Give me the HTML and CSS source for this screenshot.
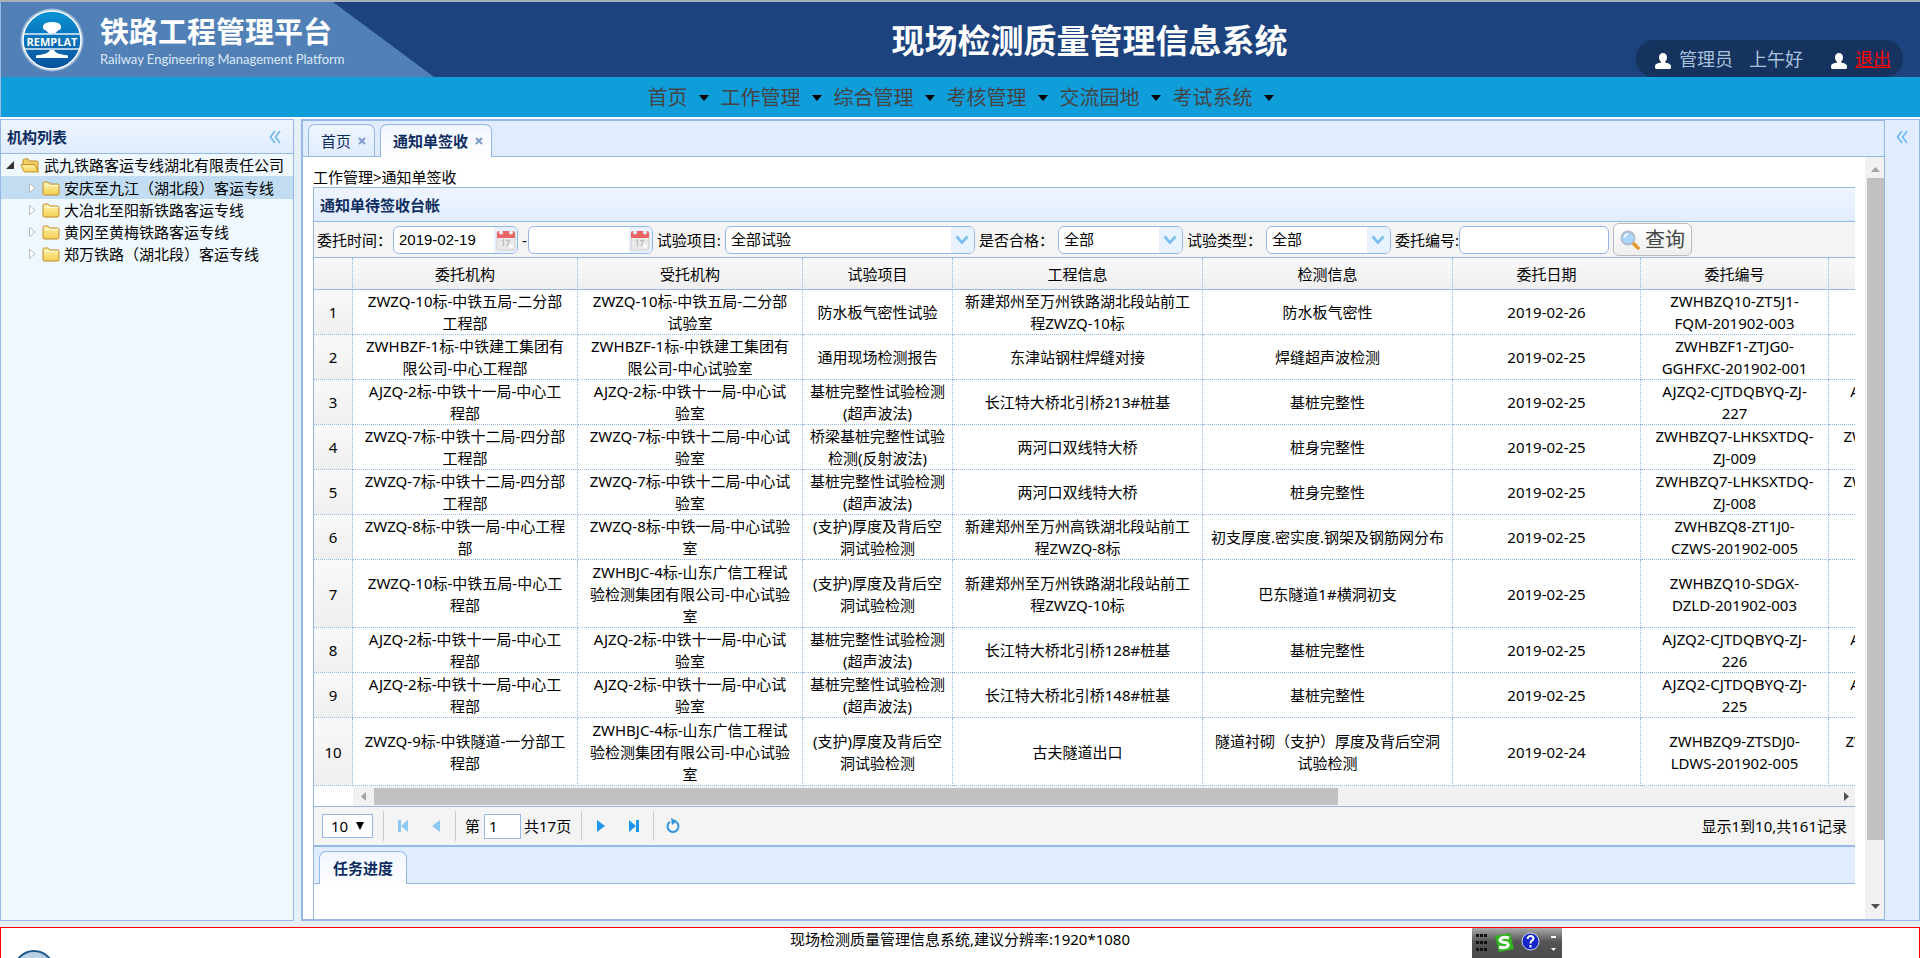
FILE: index.html
```html
<!DOCTYPE html>
<html lang="zh-CN">

<head>
  <meta charset="UTF-8">
  <meta name="viewport" content="width=device-width, initial-scale=1.0">
  <title>现场检测质量管理信息系统</title>

  <link rel="stylesheet" href="styles.css">
</head>

<body>
  <svg class="sprite" width="0" height="0">
    <defs>
      <linearGradient id="folder-fill" x1="0" y1="0" x2="0" y2="1">
        <stop offset="0" stop-color="#fff3a8" />
        <stop offset="1" stop-color="#f5cf55" />
      </linearGradient>
      <linearGradient id="logo-fill" x1="0" y1="0" x2="0" y2="1">
        <stop offset="0" stop-color="#0a93d6" />
        <stop offset="1" stop-color="#06509a" />
      </linearGradient>
    </defs>
    <symbol id="folder" viewBox="0 0 18 16">
      <path d="M1 3.500Q1 2 2.500 2H6L8 4H15.500Q17 4 17 5.500V13.500Q17 15 15.500 15H2.500Q1 15 1 13.500Z" fill="url(#folder-fill)" stroke="#c08b2a" />
      <path d="M2 5.500H16" stroke="#fffbe0" />
    </symbol>
    <symbol id="folder-open" viewBox="0 0 20 16">
      <path d="M3 12V3.500Q3 2 4.500 2H8L10 4H16.500Q18 4 18 5.500V14H5Z" fill="#f3cf63" stroke="#c08b2a" />
      <path d="M1 7.500H14.500L18.500 15H5Q4 15 3.500 14Z" fill="url(#folder-fill)" stroke="#c9942c" />
    </symbol>
    <symbol id="person" viewBox="0 0 16 16">
      <path d="M8 0C10.500 0 12 2 12 4.500C12 6.500 11 8 10 8.800V9.500C13 10 16 11 16 13V14.500Q16 16 14.500 16H1.500Q0 16 0 14.500V13C0 11 3 10 6 9.500V8.800C5 8 4 6.500 4 4.500C4 2 5.500 0 8 0Z" fill="#fff" />
    </symbol>
    <symbol id="collapse" viewBox="0 0 12 14">
      <path d="M6 1L1.500 7L6 13M11 1L6.500 7L11 13" fill="none" stroke="#6db6ee" stroke-width="1.600" />
    </symbol>
    <symbol id="calendar" viewBox="0 0 20 22">
      <rect x="1" y="3" width="18" height="18" rx="1.500" fill="#e9e9e9" stroke="#cfcfcf" />
      <path d="M1 4Q1 2 3 2H17Q19 2 19 4V9H1Z" fill="#e96466" />
      <circle cx="5" cy="3.500" r="2" fill="#f4f4f4" />
      <circle cx="15" cy="3.500" r="2" fill="#f4f4f4" />
      <path d="M6 12L7.500 11V17M10 11.500H13.500L11 17" fill="none" stroke="#bdbdbd" stroke-width="1.300" />
      <circle cx="15" cy="17" r="2" fill="#fff" />
    </symbol>
    <symbol id="chevron" viewBox="0 0 14 10">
      <path d="M1.500 1.500L7 7.500L12.500 1.500" fill="none" stroke="#79bff0" stroke-width="2.600" />
    </symbol>
  </svg>

  <header class="banner">
    <div class="brand">
      <svg class="brand-logo" width="68" height="68" viewBox="0 0 68 68">
        <circle cx="34" cy="34" r="31.500" fill="#cfe2f4" opacity=".6" />
        <circle cx="34" cy="34" r="29" fill="url(#logo-fill)" stroke="#fff" stroke-width="1.500" />
        <path d="M28 17Q34 15 40 17Q43 18 43 21Q43 24 40 24.500L37 27.500H31L28 24.500Q25 24 25 21Q25 18 28 17Z" fill="#fff" />
        <path d="M5 28H63M5 43H63" stroke="#e6f1fb" stroke-width="1.300" />
        <path d="M32 44H36Q37 48 50 49.500V52H18V49.500Q31 48 32 44Z" fill="#fff" />
        <text x="34" y="40" class="logo-text">REMPLAT</text>
      </svg>
      <div class="brand-names">
        <div class="brand-cn">铁路工程管理平台</div>
        <div class="brand-en">Railway Engineering Management Platform</div>
      </div>
    </div>
    <h1>现场检测质量管理信息系统</h1>
    <div class="user-box">
      <svg width="16" height="16"><use href="#person" /></svg>
      <span class="user-name">管理员</span>
      <span class="greeting">上午好</span>
      <svg width="16" height="16"><use href="#person" /></svg>
      <a href="#" class="logout">退出</a>
    </div>
  </header>

  <nav class="menu">
    <button type="button">首页</button>
    <button type="button">工作管理</button>
    <button type="button">综合管理</button>
    <button type="button">考核管理</button>
    <button type="button">交流园地</button>
    <button type="button">考试系统</button>
  </nav>

  <main class="layout">
    <aside class="west">
      <div class="panel-header">
        <h2>机构列表</h2>
        <svg width="12" height="14"><use href="#collapse" /></svg>
      </div>
      <ul class="tree">
        <li class="root">
          <svg width="10" height="10"><path d="M9 1V9H1Z" fill="#333" /></svg>
          <svg width="20" height="16"><use href="#folder-open" /></svg>
          <span>武九铁路客运专线湖北有限责任公司</span>
        </li>
        <li class="selected">
          <svg width="10" height="12"><path d="M2.500 1.500L8 6L2.500 10.500Z" fill="#fff" stroke="#bbb" /></svg>
          <svg width="18" height="16"><use href="#folder" /></svg>
          <span>安庆至九江（湖北段）客运专线</span>
        </li>
        <li>
          <svg width="10" height="12"><path d="M2.500 1.500L8 6L2.500 10.500Z" fill="#fff" stroke="#bbb" /></svg>
          <svg width="18" height="16"><use href="#folder" /></svg>
          <span>大冶北至阳新铁路客运专线</span>
        </li>
        <li>
          <svg width="10" height="12"><path d="M2.500 1.500L8 6L2.500 10.500Z" fill="#fff" stroke="#bbb" /></svg>
          <svg width="18" height="16"><use href="#folder" /></svg>
          <span>黄冈至黄梅铁路客运专线</span>
        </li>
        <li>
          <svg width="10" height="12"><path d="M2.500 1.500L8 6L2.500 10.500Z" fill="#fff" stroke="#bbb" /></svg>
          <svg width="18" height="16"><use href="#folder" /></svg>
          <span>郑万铁路（湖北段）客运专线</span>
        </li>
      </ul>
    </aside>

    <section class="center">
      <div class="tabs">
        <div class="tab">首页<svg width="8" height="8"><path d="M1 1L7 7M7 1L1 7" stroke="#7f9cc8" stroke-width="2" /></svg></div>
        <div class="tab active">通知单签收<svg width="8" height="8"><path d="M1 1L7 7M7 1L1 7" stroke="#7f9cc8" stroke-width="2" /></svg></div>
      </div>

      <div class="frame">
        <div class="content">
          <div class="crumb">工作管理&gt;通知单签收</div>

          <div class="panel">
            <div class="panel-header">
              <h2>通知单待签收台帐</h2>
            </div>

            <form class="toolbar">
              <label for="date-from" class="w-colon">委托时间：</label>
              <span class="combo date">
                <input type="text" id="date-from" value="2019-02-19">
                <span class="combo-btn"><svg width="20" height="22"><use href="#calendar" /></svg></span>
              </span>
              <label for="date-to" class="dash">-</label>
              <span class="combo date">
                <input type="text" id="date-to">
                <span class="combo-btn"><svg width="20" height="22"><use href="#calendar" /></svg></span>
              </span>
              <label for="item">试验项目:</label>
              <span class="combo wide">
                <select id="item"><option>全部试验</option></select>
                <span class="combo-btn"><svg width="14" height="10"><use href="#chevron" /></svg></span>
              </span>
              <label for="qualified">是否合格：</label>
              <span class="combo">
                <select id="qualified"><option>全部</option></select>
                <span class="combo-btn"><svg width="14" height="10"><use href="#chevron" /></svg></span>
              </span>
              <label for="type">试验类型：</label>
              <span class="combo">
                <select id="type"><option>全部</option></select>
                <span class="combo-btn"><svg width="14" height="10"><use href="#chevron" /></svg></span>
              </span>
              <label for="code">委托编号:</label>
              <span class="combo code">
                <input type="text" id="code">
              </span>
              <button type="button" class="search">
                <svg width="20" height="20" viewBox="0 0 20 20">
                  <path d="M12 12L18 18" stroke="#e8952f" stroke-width="3.500" stroke-linecap="round" />
                  <circle cx="8" cy="8" r="6.500" fill="#a9d6fb" stroke="#b4bccb" stroke-width="2" />
                  <path d="M4.500 7.500Q5 4.500 8 4" fill="none" stroke="#fff" stroke-width="1.500" />
                </svg>
                查询
              </button>
            </form>

            <div class="grid">
              <table>
                <colgroup>
                  <col class="c-num">
                  <col class="c-org">
                  <col class="c-org">
                  <col class="c-item">
                  <col class="c-info">
                  <col class="c-info">
                  <col class="c-code">
                  <col class="c-code">
                  <col class="c-code">
                </colgroup>
                <thead>
                  <tr>
                    <th></th>
                    <th>委托机构</th>
                    <th>受托机构</th>
                    <th>试验项目</th>
                    <th>工程信息</th>
                    <th>检测信息</th>
                    <th>委托日期</th>
                    <th>委托编号</th>
                    <th></th>
                  </tr>
                </thead>
                <tbody>
                  <tr>
                    <td>1</td>
                    <td>ZWZQ-10标-中铁五局-二分部<br>工程部</td>
                    <td>ZWZQ-10标-中铁五局-二分部<br>试验室</td>
                    <td>防水板气密性试验</td>
                    <td>新建郑州至万州铁路湖北段站前工程ZWZQ-10标</td>
                    <td>防水板气密性</td>
                    <td>2019-02-26</td>
                    <td>ZWHBZQ10-ZT5J1-<br>FQM-201902-003</td>
                    <td>ZWHBZQ10-ZT5J1-<br>FQM-201902-003</td>
                  </tr>
                  <tr>
                    <td>2</td>
                    <td>ZWHBZF-1标-中铁建工集团有限公司-中心工程部</td>
                    <td>ZWHBZF-1标-中铁建工集团有限公司-中心试验室</td>
                    <td>通用现场检测报告</td>
                    <td>东津站钢柱焊缝对接</td>
                    <td>焊缝超声波检测</td>
                    <td>2019-02-25</td>
                    <td>ZWHBZF1-ZTJG0-<br>GGHFXC-201902-001</td>
                    <td></td>
                  </tr>
                  <tr>
                    <td>3</td>
                    <td>AJZQ-2标-中铁十一局-中心工<br>程部</td>
                    <td>AJZQ-2标-中铁十一局-中心试<br>验室</td>
                    <td>基桩完整性试验检测(超声波法)</td>
                    <td>长江特大桥北引桥213#桩基</td>
                    <td>基桩完整性</td>
                    <td>2019-02-25</td>
                    <td>AJZQ2-CJTDQBYQ-ZJ-<br>227</td>
                    <td>AJZQ2-CJTDQBYQ-ZJ-<br>227</td>
                  </tr>
                  <tr>
                    <td>4</td>
                    <td>ZWZQ-7标-中铁十二局-四分部工程部</td>
                    <td>ZWZQ-7标-中铁十二局-中心试验室</td>
                    <td>桥梁基桩完整性试验检测(反射波法)</td>
                    <td>两河口双线特大桥</td>
                    <td>桩身完整性</td>
                    <td>2019-02-25</td>
                    <td>ZWHBZQ7-LHKSXTDQ-<br>ZJ-009</td>
                    <td>ZWHBZQ7-LHKSXTDQ-<br>ZJ-009</td>
                  </tr>
                  <tr>
                    <td>5</td>
                    <td>ZWZQ-7标-中铁十二局-四分部工程部</td>
                    <td>ZWZQ-7标-中铁十二局-中心试验室</td>
                    <td>基桩完整性试验检测(超声波法)</td>
                    <td>两河口双线特大桥</td>
                    <td>桩身完整性</td>
                    <td>2019-02-25</td>
                    <td>ZWHBZQ7-LHKSXTDQ-<br>ZJ-008</td>
                    <td>ZWHBZQ7-LHKSXTDQ-<br>ZJ-008</td>
                  </tr>
                  <tr>
                    <td>6</td>
                    <td>ZWZQ-8标-中铁一局-中心工程部</td>
                    <td>ZWZQ-8标-中铁一局-中心试验室</td>
                    <td>(支护)厚度及背后空洞试验检测</td>
                    <td>新建郑州至万州高铁湖北段站前工程ZWZQ-8标</td>
                    <td>初支厚度.密实度.钢架及钢筋网分布</td>
                    <td>2019-02-25</td>
                    <td>ZWHBZQ8-ZT1J0-<br>CZWS-201902-005</td>
                    <td></td>
                  </tr>
                  <tr class="tall">
                    <td>7</td>
                    <td>ZWZQ-10标-中铁五局-中心工<br>程部</td>
                    <td>ZWHBJC-4标-山东广信工程试验检测集团有限公司-中心试验室</td>
                    <td>(支护)厚度及背后空洞试验检测</td>
                    <td>新建郑州至万州铁路湖北段站前工程ZWZQ-10标</td>
                    <td>巴东隧道1#横洞初支</td>
                    <td>2019-02-25</td>
                    <td>ZWHBZQ10-SDGX-<br>DZLD-201902-003</td>
                    <td></td>
                  </tr>
                  <tr>
                    <td>8</td>
                    <td>AJZQ-2标-中铁十一局-中心工<br>程部</td>
                    <td>AJZQ-2标-中铁十一局-中心试<br>验室</td>
                    <td>基桩完整性试验检测(超声波法)</td>
                    <td>长江特大桥北引桥128#桩基</td>
                    <td>基桩完整性</td>
                    <td>2019-02-25</td>
                    <td>AJZQ2-CJTDQBYQ-ZJ-<br>226</td>
                    <td>AJZQ2-CJTDQBYQ-ZJ-<br>226</td>
                  </tr>
                  <tr>
                    <td>9</td>
                    <td>AJZQ-2标-中铁十一局-中心工<br>程部</td>
                    <td>AJZQ-2标-中铁十一局-中心试<br>验室</td>
                    <td>基桩完整性试验检测(超声波法)</td>
                    <td>长江特大桥北引桥148#桩基</td>
                    <td>基桩完整性</td>
                    <td>2019-02-25</td>
                    <td>AJZQ2-CJTDQBYQ-ZJ-<br>225</td>
                    <td>AJZQ2-CJTDQBYQ-ZJ-<br>225</td>
                  </tr>
                  <tr class="tall">
                    <td>10</td>
                    <td>ZWZQ-9标-中铁隧道-一分部工程部</td>
                    <td>ZWHBJC-4标-山东广信工程试验检测集团有限公司-中心试验室</td>
                    <td>(支护)厚度及背后空洞试验检测</td>
                    <td>古夫隧道出口</td>
                    <td>隧道衬砌（支护）厚度及背后空洞试验检测</td>
                    <td>2019-02-24</td>
                    <td>ZWHBZQ9-ZTSDJ0-<br>LDWS-201902-005</td>
                    <td>ZWHBZQ9-ZTSDJ0-GF-<br>201902-005</td>
                  </tr>
                </tbody>
              </table>
            </div>

            <div class="h-scroll">
              <svg width="21" height="17"><path d="M13 4V13L8 8.500Z" fill="#a3a3a3" /></svg>
              <div class="h-track"><div class="h-thumb"></div></div>
              <svg width="21" height="17"><path d="M10 4V13L15 8.500Z" fill="#505050" /></svg>
            </div>

            <div class="pager">
              <span class="page-size">
                <select aria-label="每页条数"><option>10</option></select>
                <svg width="8" height="8"><path d="M0 0H8L4 8Z" fill="#000" /></svg>
              </span>
              <i class="sep"></i>
              <button type="button" aria-label="第一页"><svg width="12" height="14"><path d="M1 1H4V13H1ZM11 1V13L4 7Z" fill="#8cc8f2" /></svg></button>
              <button type="button" aria-label="上一页"><svg width="12" height="14"><path d="M10 1V13L2 7Z" fill="#8cc8f2" /></svg></button>
              <i class="sep"></i>
              <label for="page">第</label>
              <input type="text" id="page" value="1">
              <span class="page-total">共17页</span>
              <i class="sep"></i>
              <button type="button" aria-label="下一页"><svg width="12" height="14"><path d="M2 1V13L10 7Z" fill="#1e96ea" /></svg></button>
              <button type="button" aria-label="末页"><svg width="12" height="14"><path d="M1 1V13L8 7ZM8 1H11V13H8Z" fill="#1e96ea" /></svg></button>
              <i class="sep"></i>
              <button type="button" aria-label="刷新"><svg width="16" height="16"><path d="M5 3.800A5.500 5.500 0 1 0 11 3.800" fill="none" stroke="#2f93de" stroke-width="2" /><path d="M6 0L12 3L7 7Z" fill="#2f93de" /></svg></button>
              <span class="page-info">显示1到10,共161记录</span>
            </div>
          </div>

          <div class="sub-tabs">
            <div class="tab active">任务进度</div>
          </div>
          <div class="sub-body"></div>
        </div>

        <div class="v-scroll">
          <svg width="19" height="21"><path d="M6 15H15L10.500 10Z" fill="#a3a3a3" /></svg>
          <div class="v-track"><div class="v-thumb"></div></div>
          <svg width="19" height="21"><path d="M6 6H15L10.500 11Z" fill="#505050" /></svg>
        </div>
      </div>
    </section>

    <aside class="east">
      <svg width="12" height="14"><use href="#collapse" /></svg>
    </aside>
  </main>

  <footer class="footer">
    <svg class="footer-logo" width="42" height="42">
      <circle cx="21" cy="21" r="20" fill="#b9cfe2" stroke="#1f5a8c" stroke-width="2" />
      <circle cx="17" cy="14" r="6" fill="#b5523c" />
    </svg>
    现场检测质量管理信息系统,建议分辨率:1920*1080
    <div class="ime-bar">
      <svg width="90" height="30">
        <g fill="#111">
          <path d="M4 6h3v3h-3zM8 6h3v3h-3zM12 6h3v3h-3zM4 13h3v3h-3zM8 13h3v3h-3zM12 13h3v3h-3zM4 20h3v3h-3zM8 20h3v3h-3zM12 20h3v3h-3z" />
        </g>
        <path d="M23 8L38 5L42 21L27 24Z" fill="#2fb41c" />
        <path d="M37 10Q29 8 28 12Q28 14 33 14.500Q37 15 36 18Q34 21 27 19" fill="none" stroke="#fff" stroke-width="3" />
        <circle cx="58.500" cy="13.500" r="8.500" fill="#1326c9" stroke="#d6d9e8" />
        <path d="M55.500 11Q56 8 58.500 8Q61.500 8 61.500 10.500Q61.500 12 59.500 13Q58.500 14 58.500 15.500M58.500 17V19.500" fill="none" stroke="#fff" stroke-width="2" />
        <path d="M79 8H84V10H79ZM79 20H84L81.500 23Z" fill="#fff" />
      </svg>
    </div>
  </footer>
</body>

</html>
```

FILE: styles.css
```css
* {
  box-sizing: border-box;
}

body {
  border-top: 2px solid #a8b0b8;
  color: #000;
  display: flex;
  flex-direction: column;
  font-family: "Noto Sans", "Noto Sans CJK SC", sans-serif;
  font-size: 15px;
  height: 100vh;
  line-height: 22px;
  margin: 0;
  overflow: hidden;
}

button,
input,
select {
  color: inherit;
  font: inherit;
  margin: 0;
}

svg {
  display: block;
  flex-shrink: 0;
}

.sprite {
  position: absolute;
}

/* banner */
.banner {
  align-items: stretch;
  background-color: #1c437e;
  border-left: 1px solid #95b8e7;
  display: grid;
  flex-shrink: 0;
  grid-template-columns: 1fr auto 1fr;
  height: 75px;
}

.brand {
  background-color: #5180b7;
  clip-path: polygon(0 0, 332px 0, 100% 100%, 0 100%);
  display: flex;
  gap: 14px;
  padding: 4px 0 0 17px;
  width: 433px;
}

.logo-text {
  fill: #fff;
  font-family: "Open Sans", sans-serif;
  font-size: 11px;
  font-weight: bold;
  text-anchor: middle;
}

.brand-names {
  color: #fff;
  white-space: nowrap;
}

.brand-cn {
  font-size: 29px;
  font-weight: bold;
  line-height: 40px;
  padding-top: 6px;
}

.brand-en {
  color: #dce8f5;
  font-family: Lato, sans-serif;
  font-size: 13px;
  line-height: 14px;
}

.banner h1 {
  align-self: center;
  color: #fff;
  font-size: 33px;
  line-height: 40px;
  margin: 2px 0 0 258px;
}

.user-box {
  align-items: center;
  align-self: end;
  background-color: #16335f;
  border-radius: 18px;
  color: #a9c3dd;
  display: flex;
  font-size: 18px;
  height: 37px;
  justify-self: end;
  margin-right: 17px;
  padding: 0 12px 0 19px;
}

.user-box svg {
  margin-top: 4px;
}

.user-box span,
.user-box a {
  margin-left: 8px;
}

.user-box .greeting {
  margin-left: 16px;
  margin-right: 28px;
}

.user-box .logout {
  color: #f00;
}

/* menu */
.menu {
  background-color: #109eda;
  border-left: 1px solid #95b8e7;
  display: flex;
  flex-shrink: 0;
  height: 40px;
  justify-content: center;
  padding: 2px 0 0 12px;
}

.menu button {
  align-items: center;
  background: none;
  border: 0;
  color: #444;
  display: flex;
  font-size: 20px;
  gap: 11px;
  padding: 0 12px 0 0;
}

.menu button::after {
  border-left: 5px solid transparent;
  border-right: 5px solid transparent;
  border-top: 6px solid #000;
  content: "";
}

/* layout */
.layout {
  background-color: #e6eef8;
  border-top: 2px solid #fff;
  display: flex;
  flex: 1;
  min-height: 0;
  padding-bottom: 6px;
}

.west {
  background-color: #f0f8ff;
  border: 1px solid #95b8e7;
  margin-right: 7px;
  width: 294px;
}

.panel-header {
  align-items: center;
  background: linear-gradient(#eff5ff, #e0ecff);
  border-bottom: 1px solid #95b8e7;
  color: #0e2d5f;
  display: flex;
  height: 34px;
  justify-content: space-between;
  padding: 0 12px 0 6px;
}

.panel-header h2 {
  font-size: 15px;
  margin: 0;
}

.tree {
  list-style: none;
  margin: 0;
  padding: 0;
}

.tree li {
  align-items: center;
  display: flex;
  height: 22px;
  padding-left: 26px;
  white-space: nowrap;
}

.tree li.root {
  padding-left: 4px;
}

.tree li svg:first-child {
  margin-right: 5px;
}

.tree li span {
  margin-left: 4px;
}

.tree li.selected {
  background-color: #c2ddf2;
  height: 23px;
}

.center {
  background-color: #fff;
  border: 2px solid #95b8e7;
  border-right-width: 1px;
  display: flex;
  flex: 1;
  flex-direction: column;
  min-width: 0;
}

.east {
  background-color: #e0ecff;
  border: 1px solid #95b8e7;
  border-left: 0;
  display: flex;
  justify-content: center;
  padding-top: 10px;
  width: 35px;
}

/* tabs */
.tabs,
.sub-tabs {
  align-items: flex-end;
  background-color: #e0ecff;
  border-bottom: 1px solid #95b8e7;
  display: flex;
  flex-shrink: 0;
  gap: 5px;
  height: 36px;
  padding-left: 5px;
}

.tab {
  align-items: center;
  background: linear-gradient(#eff5ff, #e0ecff);
  border: 1px solid #95b8e7;
  border-bottom: 0;
  border-radius: 7px 7px 0 0;
  color: #0e2d5f;
  display: flex;
  gap: 7px;
  height: 32px;
  padding: 0 8px 0 12px;
}

.tab.active {
  background: linear-gradient(#eff5ff, #fff);
  font-weight: bold;
  height: 33px;
  margin-bottom: -1px;
}

.frame {
  display: flex;
  flex: 1;
  min-height: 0;
}

.content {
  display: flex;
  flex: 1;
  flex-direction: column;
  min-width: 0;
  padding: 9px 10px 0;
}

.crumb {
  margin-bottom: -1px;
}

.panel {
  border: 1px solid #95b8e7;
  border-bottom-width: 2px;
  border-right: 0;
}

/* query form */
.toolbar {
  align-items: center;
  background-color: #f4f4f4;
  border-bottom: 1px solid #95b8e7;
  display: flex;
  height: 36px;
  padding-left: 3px;
  white-space: nowrap;
}

.toolbar label {
  margin-right: 4px;
}

.toolbar .w-colon {
  width: 76px;
  margin-right: 0;
}

.toolbar .dash {
  margin-right: 1px;
}

.combo {
  background-color: #fff;
  border: 1px solid #95b8e7;
  border-radius: 6px;
  display: flex;
  height: 28px;
  margin-right: 4px;
  overflow: hidden;
  width: 125px;
}

.combo.wide {
  width: 250px;
}

.combo.code {
  margin-left: -4px;
  width: 150px;
}

.combo input,
.combo select {
  appearance: none;
  background: none;
  border: 0;
  flex: 1;
  font-family: "Liberation Sans", "Noto Sans CJK SC", sans-serif;
  min-width: 0;
  padding: 0 5px;
}

.combo-btn {
  align-items: center;
  background-color: #e8f1ff;
  display: flex;
  flex-shrink: 0;
  justify-content: center;
  width: 23px;
}

.search {
  align-items: center;
  background: linear-gradient(#fff, #eee);
  border: 1px solid #bbb;
  border-radius: 6px;
  color: #444;
  display: flex;
  font-size: 20px;
  gap: 5px;
  height: 33px;
  padding: 0 6px;
}

/* data grid */
.grid {
  overflow: hidden;
}

.grid table {
  border-collapse: separate;
  border-spacing: 0;
  table-layout: fixed;
  width: 1703px;
}

.c-num {
  width: 39px;
}

.c-org {
  width: 225px;
}

.c-item {
  width: 150px;
}

.c-info {
  width: 250px;
}

.c-code {
  width: 188px;
}

.grid th {
  background: linear-gradient(#f9f9f9, #efefef);
  border-bottom: 1px solid #95b8e7;
  border-right: 1px dotted #95b8e7;
  font-weight: normal;
  height: 32px;
  padding: 0;
}

.grid td {
  border-bottom: 1px dotted #95b8e7;
  border-right: 1px dotted #95b8e7;
  height: 45px;
  padding: 0 7px;
  text-align: center;
}

.grid .tall td {
  height: 68px;
}

.grid td:first-child {
  background: linear-gradient(#f9f9f9, #efefef);
  padding: 0;
}

.h-scroll {
  align-items: center;
  background-color: #f1f1f1;
  border-left: 39px solid #fff;
  display: flex;
  height: 20px;
}

.h-track {
  flex: 1;
}

.h-thumb {
  background-color: #c1c1c1;
  height: 17px;
  width: 66%;
}

/* pager */
.pager {
  align-items: center;
  background-color: #f4f4f4;
  border-top: 1px solid #95b8e7;
  display: flex;
  height: 39px;
  padding: 0 8px;
}

.page-size {
  align-items: center;
  background-color: #fff;
  border: 1px solid #95b8e7;
  display: flex;
  height: 24px;
  margin-right: 10px;
  padding-right: 8px;
  width: 51px;
}

.page-size select {
  appearance: none;
  background: none;
  border: 0;
  flex: 1;
  min-width: 0;
  padding: 0 0 0 8px;
}

.sep {
  background-color: #ccc;
  height: 30px;
  margin-right: 5px;
  width: 1px;
}

.pager button {
  background: none;
  border: 0;
  display: flex;
  justify-content: center;
  margin-right: 5px;
  padding: 0;
  width: 28px;
}

.pager label {
  margin: 0 4px;
}

.pager input {
  border: 1px solid #95b8e7;
  height: 25px;
  margin-right: 3px;
  padding: 0 4px;
  width: 37px;
}

.page-total {
  margin-right: 10px;
}

.page-info {
  margin-left: auto;
}

.sub-tabs {
  border-left: 1px solid #95b8e7;
  height: 37px;
}

.sub-tabs .tab {
  padding: 0 13px;
}

.sub-body {
  border-left: 1px solid #95b8e7;
  flex: 1;
}

.v-scroll {
  background-color: #f1f1f1;
  display: flex;
  flex-direction: column;
  width: 19px;
}

.v-track {
  flex: 1;
  padding-left: 2px;
}

.v-thumb {
  background-color: #c1c1c1;
  height: 92%;
}

/* footer */
.footer {
  background-color: #fff;
  border: 1px solid #f00;
  border-bottom: 0;
  flex-shrink: 0;
  height: 31px;
  overflow: hidden;
  position: relative;
  text-align: center;
}

.footer-logo {
  left: 12px;
  position: absolute;
  top: 22px;
}

.ime-bar {
  background: linear-gradient(#aaa, #555 45%, #4a4a4a);
  position: absolute;
  right: 357px;
  top: 0;
}
```
